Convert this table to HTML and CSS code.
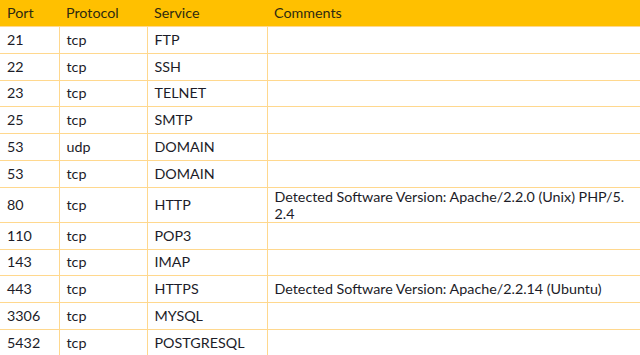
FILE: index.html
```html
<!DOCTYPE html>
<html lang="en">
<head>
  <meta charset="UTF-8" />
  <meta name="viewport" content="width=device-width, initial-scale=1.0" />
  <title>Open Ports</title>
  <link rel="stylesheet" href="styles.css">
</head>
<body>
  <table class="ports">
    <colgroup>
      <col class="col-port">
      <col class="col-proto">
      <col class="col-service">
      <col class="col-comments">
    </colgroup>
    <thead>
      <tr>
        <th>Port</th>
        <th>Protocol</th>
        <th>Service</th>
        <th>Comments</th>
      </tr>
    </thead>
    <tbody>
      <tr><td>21</td><td>tcp</td><td>FTP</td><td></td></tr>
      <tr><td>22</td><td>tcp</td><td>SSH</td><td></td></tr>
      <tr><td>23</td><td>tcp</td><td>TELNET</td><td></td></tr>
      <tr><td>25</td><td>tcp</td><td>SMTP</td><td></td></tr>
      <tr><td>53</td><td>udp</td><td>DOMAIN</td><td></td></tr>
      <tr><td>53</td><td>tcp</td><td>DOMAIN</td><td></td></tr>
      <tr class="tall"><td>80</td><td>tcp</td><td>HTTP</td><td>Detected Software Version: Apache/2.2.0 (Unix) PHP/5.<br>2.4</td></tr>
      <tr><td>110</td><td>tcp</td><td>POP3</td><td></td></tr>
      <tr><td>143</td><td>tcp</td><td>IMAP</td><td></td></tr>
      <tr><td>443</td><td>tcp</td><td>HTTPS</td><td>Detected Software Version: Apache/2.2.14 (Ubuntu)</td></tr>
      <tr><td>3306</td><td>tcp</td><td>MYSQL</td><td></td></tr>
      <tr><td>5432</td><td>tcp</td><td>POSTGRESQL</td><td></td></tr>
    </tbody>
  </table>
</body>
</html>
```

FILE: styles.css
```css
body {
  margin: 0;
  padding: 0;
  background: #fff;
  font-family: 'Lato', 'Liberation Sans', sans-serif;
  font-size: 14.3px;
  color: #1c1c28;
}

.ports {
  width: 640px;
  border-collapse: collapse;
  table-layout: fixed;
}

.col-port { width: 59px; }
.col-proto { width: 88px; }
.col-service { width: 120px; }
.col-comments { width: 373px; }

.ports th {
  background: #ffc000;
  color: #2e2a10;
  font-weight: normal;
  text-align: left;
  height: 26px;
  padding: 0 7px;
  line-height: 16px;
}

.ports td {
  height: 25.8px;
  padding: 0 7px;
  line-height: 16px;
  vertical-align: middle;
  border: 1px solid #ffd88e;
}

.ports td:first-child {
  border-left: none;
}

.ports td:last-child {
  border-right: 1px solid #ffcb6b;
}

.ports tbody tr:last-child td {
  border-bottom: 1px solid #ffcb6b;
}

.ports tr.tall td {
  height: 33px;
  line-height: 17px;
}
```
